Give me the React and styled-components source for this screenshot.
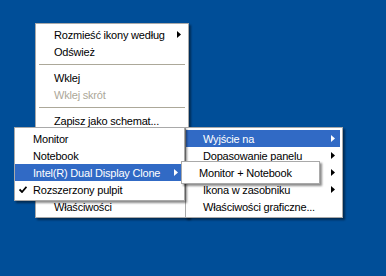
import React from "react";
import styled, { createGlobalStyle } from "styled-components";

const GlobalStyle = createGlobalStyle`
    html, body {
        margin: 0;
        padding: 0;
        width: 386px;
        height: 276px;
        overflow: hidden;
    }
`;

const Desktop = styled.div`
    position: relative;
    width: 386px;
    height: 276px;
    background: #004e98;
    overflow: hidden;
    font-family: "Liberation Sans", Arial, sans-serif;
    font-size: 11px;
    letter-spacing: -0.2px;
    color: #000;
`;

// popup menus float over the desktop, so they are placed by coordinates
const Menu = styled.ul`
    position: absolute;
    left: ${props => props.$x}px;
    top: ${props => props.$y}px;
    width: ${props => props.$w}px;
    z-index: ${props => props.$z};
    display: flex;
    flex-direction: column;
    margin: 0;
    padding: 2px 0;
    list-style: none;
    background: #fff;
    border: 1px solid #a9a9a9;
    box-shadow: 2px 2px 2px rgba(0, 0, 0, 0.45);
    box-sizing: border-box;
`;

const Item = styled.li`
    display: flex;
    align-items: center;
    height: 17px;
    margin-right: 2px;
    padding-left: 4px;
    padding-right: ${props => props.$arrowGap}px;
    white-space: nowrap;
    background: ${props => (props.$active ? "#316ac5" : "transparent")};
    color: ${props => (props.$active ? "#fff" : props.$disabled ? "#aca899" : "#000")};
`;

const Gutter = styled.span`
    display: flex;
    align-items: center;
    width: ${props => props.$indent - 4}px;
    flex-shrink: 0;
`;

const Label = styled.span`
    flex: 1;
`;

const Separator = styled.li`
    height: 9px;
    display: flex;
    align-items: center;
    padding: 0 3px;

    &::after {
        content: "";
        flex: 1;
        height: 1px;
        background: #aca899;
    }
`;

const SubArrow = ({ active }) => (
    <svg width="4" height="7" viewBox="0 0 4 7">
        <polygon points="0,0 4,3.5 0,7" fill={active ? "#fff" : "#000"} />
    </svg>
);

const CheckMark = () => (
    <svg width="8" height="7" viewBox="0 0 8 7">
        <path d="M0.5 3.5 L3 6 L7.5 0.8" stroke="#000" strokeWidth="1.8" fill="none" />
    </svg>
);

// rows hidden under the open submenus keep no label
const mainItems = [
    { label: "Rozmieść ikony według", sub: true },
    { label: "Odśwież" },
    { sep: true },
    { label: "Wklej" },
    { label: "Wklej skrót", disabled: true },
    { sep: true },
    { label: "Zapisz jako schemat..." },
    { label: "", sub: true, active: true },
    { label: "" },
    { sep: true },
    { label: "", sub: true },
    { sep: true },
    { label: "Właściwości" },
];

const optionItems = [
    { label: "Wyjście na", sub: true, active: true },
    { label: "Dopasowanie panelu", sub: true },
    { label: "", sub: true },
    { label: "Ikona w zasobniku", sub: true },
    { label: "Właściwości graficzne..." },
];

const outputItems = [
    { label: "Monitor" },
    { label: "Notebook" },
    { label: "Intel(R) Dual Display Clone", sub: true, active: true },
    { label: "Rozszerzony pulpit", checked: true },
];

const cloneItems = [
    { label: "Monitor + Notebook" },
];

const ContextMenu = ({ items, x, y, w, z, indent, arrowGap }) => (
    <Menu $x={x} $y={y} $w={w} $z={z}>
        {items.map((item, i) =>
            item.sep ? (
                <Separator key={i} />
            ) : (
                <Item key={i} $arrowGap={arrowGap} $active={item.active} $disabled={item.disabled}>
                    <Gutter $indent={indent}>{item.checked && <CheckMark />}</Gutter>
                    <Label>{item.label}</Label>
                    {item.sub && <SubArrow active={item.active} />}
                </Item>
            )
        )}
    </Menu>
);

const App = () => {
    return (
        <Desktop>
            <GlobalStyle />
            <ContextMenu items={mainItems} x={35} y={23} w={154} z={1} indent={18} arrowGap={5} />
            <ContextMenu items={optionItems} x={185} y={127} w={158} z={2} indent={17} arrowGap={5} />
            <ContextMenu items={outputItems} x={14} y={127} w={171} z={3} indent={18} arrowGap={4} />
            <ContextMenu items={cloneItems} x={181} y={161} w={139} z={4} indent={17} arrowGap={5} />
        </Desktop>
    );
};

export default App;
